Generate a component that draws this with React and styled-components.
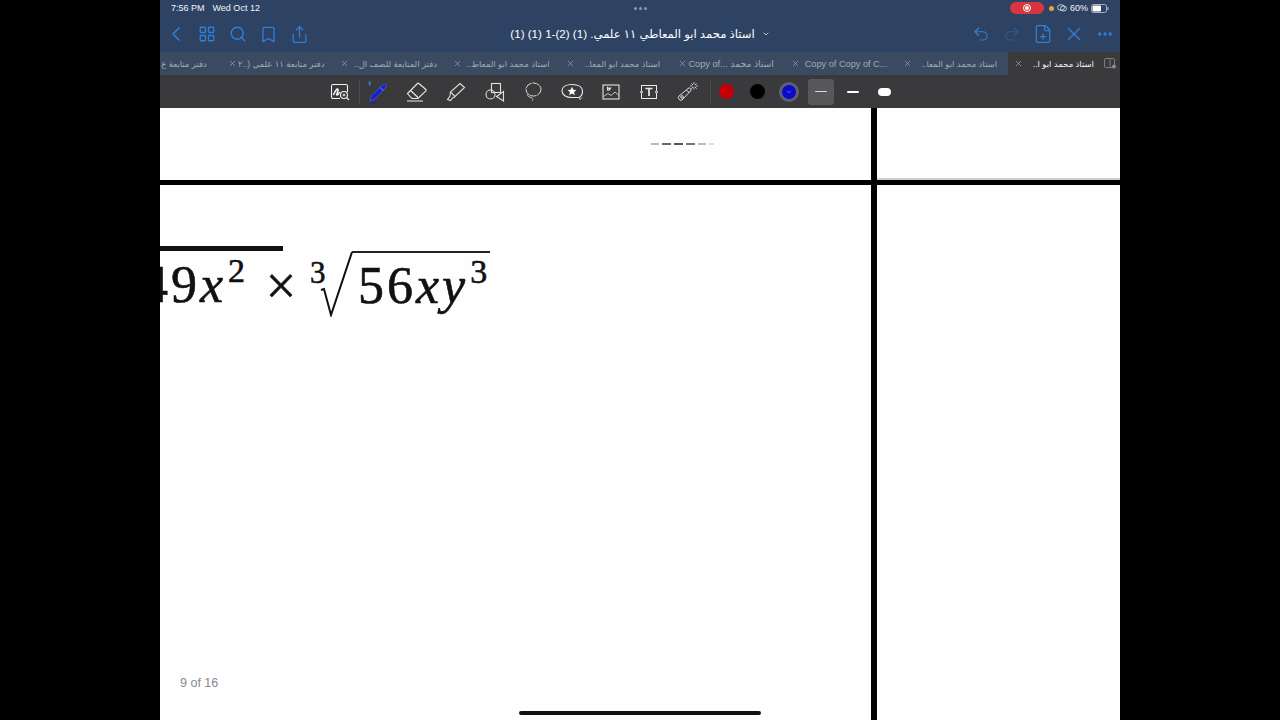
import React from 'react';
import styled, { createGlobalStyle } from 'styled-components';
import { ChevronLeft, ChevronDown, LayoutGrid, Search, Bookmark, Share, Undo2, Redo2, FilePlus, X, Ellipsis } from 'lucide-react';

const GlobalStyle = createGlobalStyle`
    html, body {
        margin: 0;
        height: 100%;
        background: #000;
    }
    #root {
        height: 100%;
    }
`;

const UI_FONT = `"Liberation Sans", "DejaVu Sans", sans-serif`;

const Stage = styled.div`
    width: 100%;
    height: 720px;
    display: flex;
    justify-content: center;
    overflow: hidden;
    background: #000;
    font-family: ${UI_FONT};
`;
const Screen = styled.div`
    position: relative;
    width: 960px;
    height: 100%;
    display: flex;
    flex-direction: column;
    background: #fff;
`;
const StatusBar = styled.div`
    height: 16px;
    padding: 0 11px;
    display: grid;
    grid-template-columns: 1fr auto 1fr;
    align-items: center;
    background: #2e4363;
    color: #f2f4f7;
    font-size: 9px;
`;
const Clock = styled.div`
    display: flex;
    gap: 8px;
`;
const Dots = styled.div`
    display: flex;
    gap: 2px;
`;
const Dot = styled.span`
    width: 3px;
    height: 3px;
    border-radius: 50%;
    background: #8d99ab;
`;
const StatusRight = styled.div`
    display: flex;
    justify-content: flex-end;
    align-items: center;
`;
const RecordPill = styled.div`
    width: 34px;
    height: 12px;
    border-radius: 6px;
    display: flex;
    align-items: center;
    justify-content: center;
    background: #d8353f;
    margin-right: 5px;
`;
const RecordRing = styled.span`
    width: 8px;
    height: 8px;
    box-sizing: border-box;
    border: 1px solid #fff;
    border-radius: 50%;
    display: flex;
    align-items: center;
    justify-content: center;
    &::after {
        content: '';
        width: 4px;
        height: 4px;
        border-radius: 50%;
        background: #fff;
    }
`;
const OrangeDot = styled.span`
    width: 5px;
    height: 5px;
    border-radius: 50%;
    background: #e8a33a;
    margin-right: 3px;
`;
const Percent = styled.span`
    margin: 0 3px;
`;

const NavBar = styled.div`
    height: 36px;
    display: grid;
    grid-template-columns: 1fr auto 1fr;
    align-items: center;
    background: #2e4363;
`;
const NavGroup = styled.div`
    display: flex;
    justify-content: ${(p) => (p.$end ? 'flex-end' : 'flex-start')};
`;
const NavButton = styled.div`
    width: 31px;
    height: 24px;
    display: flex;
    align-items: center;
    justify-content: center;
    color: ${(p) => (p.$dim ? '#2f5b8f' : '#2f80d6')};
`;
const Title = styled.div`
    display: flex;
    align-items: center;
    gap: 7px;
    color: #fff;
    font-size: 11.6px;
    white-space: nowrap;
`;

const TabBar = styled.div`
    height: 23px;
    display: flex;
    justify-content: flex-end;
    overflow: hidden;
    background: #3a4a60;
`;
const Tab = styled.div`
    flex: 0 0 ${(p) => (p.$active ? '92px' : '112.6px')};
    box-sizing: border-box;
    padding: 0 ${(p) => p.$pad || 8}px 0 ${(p) => (p.$active ? '6px' : '8px')};
    display: flex;
    align-items: center;
    justify-content: space-between;
    overflow: hidden;
    background: ${(p) => (p.$active ? '#3a3a3d' : 'transparent')};
    color: ${(p) => (p.$active ? '#f4f4f4' : '#a3abb8')};
    white-space: nowrap;
`;
const TabClose = styled.span`
    flex: none;
    display: flex;
    color: ${(p) => (p.$active ? '#c8c8c8' : '#aeb5c0')};
`;
const TabName = styled.span`
    direction: ${(p) => (p.$ltr ? 'ltr' : 'rtl')};
    font-size: ${(p) => (p.$ltr ? '9.2px' : '8.5px')};
`;
const TabSide = styled.div`
    flex: 0 0 20px;
    display: flex;
    align-items: center;
    justify-content: center;
    background: #3a3a3d;
`;

const Toolbar = styled.div`
    height: 33px;
    box-sizing: border-box;
    padding-left: 160.6px;
    display: flex;
    align-items: center;
    background: #3a3a3c;
`;
const ToolItem = styled.div`
    flex: 0 0 38.7px;
    display: flex;
    justify-content: center;
    align-items: center;
`;
const Divider = styled.span`
    flex: none;
    width: 1px;
    height: 24px;
    margin: 0 ${(p) => p.$after || 0}px 0 ${(p) => p.$before || 0}px;
    background: #4c4c4e;
`;
const Swatch = styled.div`
    flex: 0 0 ${(p) => (p.$selected ? '26px' : '31.6px')};
    height: ${(p) => (p.$selected ? '26px' : '25px')};
    margin: 0 ${(p) => (p.$selected ? '2.8px' : '0')};
    display: flex;
    align-items: center;
    justify-content: center;
    border-radius: 3px;
    background: ${(p) => (p.$selected ? '#58585a' : 'transparent')};
`;
const Color = styled.span`
    width: ${(p) => (p.$ring ? '14px' : '15px')};
    height: ${(p) => (p.$ring ? '14px' : '15px')};
    border-radius: 50%;
    display: flex;
    align-items: center;
    justify-content: center;
    background: ${(p) => p.$color};
    box-shadow: ${(p) => (p.$ring ? '0 0 0 3px #5d6075' : 'none')};
    color: #cdd3ff;
`;
const Stroke = styled.span`
    width: ${(p) => p.$w}px;
    height: ${(p) => p.$h}px;
    border-radius: ${(p) => p.$h / 2}px;
    background: ${(p) => p.$color || '#fff'};
`;

const Page = styled.div`
    flex: 1;
    min-height: 0;
    display: grid;
    grid-template-columns: 711px 5.5px 1fr;
    grid-template-rows: 72px 5px 1fr;
    background: #fefefe;
`;
const TopCell = styled.div`
    grid-column: 1;
    grid-row: 1;
    padding: 35px 0 0 491px;
`;
const SideCell = styled.div`
    grid-column: 3;
    grid-row: 1;
    border-bottom: 2px solid #cfcfcf;
`;
const RuleV = styled.div`
    grid-column: 2;
    grid-row: 1 / 4;
    background: #000;
`;
const RuleH = styled.div`
    grid-column: 1 / 4;
    grid-row: 2;
    background: #000;
`;
const Smudge = styled.div`
    display: flex;
    gap: 3px;
    filter: blur(0.4px);
`;
const SmudgeDash = styled.span`
    width: ${(p) => p.$w}px;
    height: 1.5px;
    background: ${(p) => p.$color};
`;
const MathCell = styled.div`
    grid-column: 1;
    grid-row: 3;
    padding-top: 61px;
    overflow: hidden;
`;
const MathLine = styled.div`
    display: flex;
    align-items: flex-start;
    margin-left: -18px;
    font-family: "Liberation Serif", serif;
    font-size: 52px;
    letter-spacing: 3px;
    color: #111;
    white-space: nowrap;
    -webkit-text-stroke: 0.6px #111;
`;
const Squared = styled.span`
    width: 141px;
    height: 62px;
    flex: none;
    border-top: 5px solid #111;
    line-height: 68px;
`;
const Sup = styled.sup`
    font-size: 34px;
    line-height: 0;
    letter-spacing: 0;
    margin-left: 2px;
    vertical-align: 20px;
    font-style: normal;
`;
const Times = styled.span`
    flex: none;
    width: 34px;
    margin: 0 0 0 -19px;
    font-size: 54px;
    line-height: 80px;
    letter-spacing: 0;
    text-align: center;
`;
const RootIndex = styled.span`
    flex: none;
    width: 15px;
    margin: 11px -5px 0 12px;
    font-size: 31px;
    line-height: 32px;
    letter-spacing: 0;
`;
const RootSign = styled.svg`
    flex: none;
    margin-top: 5px;
`;
const Radicand = styled.span`
    margin: 5px 0 0 -1px;
    padding: 0 3px 0 6px;
    border-top: 2px solid #222;
    height: 62px;
    line-height: 66px;
`;
const PageCount = styled.div`
    position: absolute;
    left: 20px;
    bottom: 30px;
    color: #8a8a8a;
    font-size: 12.5px;
`;
const HomeBar = styled.div`
    position: absolute;
    left: 359px;
    bottom: 5px;
    width: 242px;
    height: 4px;
    border-radius: 2px;
    background: #111;
`;

const tabs = [
    { name: 'دفتر متابعة ع', pad: 13 },
    { name: 'دفتر متابعة ١١ علمي (..٢' },
    { name: 'دفتر المتابعة للصف ال..' },
    { name: 'استاذ محمد ابو المعاط..' },
    { name: 'استاذ محمد ابو المعا..', pad: 10 },
    { name: 'Copy of... استاذ محمد', ltr: true, pad: 9 },
    { name: 'Copy of Copy of C...', ltr: true },
    { name: 'استاذ محمد ابو المعا..', pad: 11 },
    { name: 'استاذ محمد ابو ا..', active: true, pad: 6 },
];

const ScribbleIcon = () => (
    <svg width="20" height="18" viewBox="0 0 20 18" fill="none" stroke="#f2f2f2" strokeWidth="1.1">
        <path d="M3 1.5h13a1.5 1.5 0 0 1 1.5 1.5v6M10 15.5H3A1.5 1.5 0 0 1 1.5 14V3A1.5 1.5 0 0 1 3 1.5" />
        <path d="M3.5 12c2-5 4-7 4.5-5.500s-2 5-1 5.500 2-3 3-2.500" strokeWidth="1.6" />
        <circle cx="14" cy="12" r="3.500" />
        <path d="M16.500 14.500 19 17M12.700 12h2.600M14 10.700v2.600" />
    </svg>
);
const PenIcon = () => (
    <svg width="24" height="24" viewBox="0 0 26 26" fill="none">
        <path d="M3 1v5M1.500 2.500l3 2.500M1.500 5l3-2.500" stroke="#2f7fd0" strokeWidth="1" />
        <path d="M3 23l2-6L17 5.500c2-2 5-1 3.500 2L9 20z" fill="#1420d0" stroke="#5a6ff0" strokeWidth="0.6" />
        <path d="M14 8l3.500 3.500" stroke="#9fb0ff" strokeWidth="0.8" />
        <path d="M3 24.500h7" stroke="#1420d0" strokeWidth="1" />
    </svg>
);
const EraserIcon = () => (
    <svg width="22" height="20" viewBox="0 0 22 20" fill="none" stroke="#ececec" strokeWidth="1.1">
        <path d="M1.500 11.500 11.500 1.500a1 1 0 0 1 1.400 0l7 6a1 1 0 0 1 0 1.400L12 16.500H6z" />
        <path d="M4.500 8.500 12 15.500M1 19h16" />
    </svg>
);
const HighlighterIcon = () => (
    <svg width="20" height="20" viewBox="0 0 20 20" fill="none" stroke="#dcdcdc" strokeWidth="1.1">
        <path d="M14 1.500 18.500 5.500 9 14.500l-4.500-4.500zM4.500 10l-.5 4-2.500 3.500 3 1 2-2.500 3-1.500" />
    </svg>
);
const ShapesIcon = () => (
    <svg width="20" height="20" viewBox="0 0 20 20" fill="none" stroke="#e2e2e2" strokeWidth="1.1">
        <rect x="6.500" y="1.500" width="9" height="9" />
        <circle cx="5.500" cy="12.500" r="4.500" />
        <path d="M18.500 9.500v9.500l-7-4.500z" />
    </svg>
);
const LassoIcon = () => (
    <svg width="18" height="20" viewBox="0 0 18 20" fill="none" stroke="#dcdcdc" strokeWidth="1" strokeDasharray="7 0.800">
        <ellipse cx="9.500" cy="7.500" rx="7.500" ry="6.500" />
        <path d="M4 12c-1 2 1 3 3 3.500s2 2 1.500 3" />
    </svg>
);
const StarBubbleIcon = () => (
    <svg width="22" height="18" viewBox="0 0 22 18" fill="none" stroke="#ececec" strokeWidth="1.1">
        <path d="M18 14.500c2-1 3.500-3 3.500-6C21.500 4 17 1.500 11 1.500S1 4 1 8s4 6.500 10 6.500z" />
        <path d="M11 3.800l1.300 2.900 3.100.3-2.300 2.100.7 3.100-2.800-1.600-2.800 1.600.7-3.100L6.600 7l3.100-.3z" fill="#fff" stroke="none" />
        <path d="M18 14.500l1 2 2-2" strokeWidth="0.8" />
    </svg>
);
const ImageIcon = () => (
    <svg width="18" height="16" viewBox="0 0 18 16" fill="none" stroke="#e4e4e4" strokeWidth="1.1">
        <rect x="1" y="1" width="16" height="14" />
        <path d="M1.500 12.500 6 9.500l3 2 4-3.500 4 3.500" strokeWidth="0.8" />
        <path d="M5.500 3.500c1 1 2 1 3 .5-.5 1.500-1.500 2.500-3 2z" />
    </svg>
);
const TextBoxIcon = () => (
    <svg width="18" height="16" viewBox="0 0 18 16" fill="none" stroke="#ececec" strokeWidth="1">
        <rect x="1.500" y="1.500" width="15" height="13" />
        <path d="M5.500 4.500h7M9 4.500v7.500" strokeWidth="1.700" />
        <circle cx="1.500" cy="8" r="1" fill="#3a3a3c" />
        <circle cx="16.500" cy="8" r="1" fill="#3a3a3c" />
    </svg>
);
const WandIcon = () => (
    <svg width="22" height="22" viewBox="0 0 22 22" fill="none" stroke="#dedede" strokeWidth="1">
        <path d="M2 15 11 7.500a1.500 1.500 0 0 1 2.500 2.500L5 19a2 2 0 0 1-3-1 2 2 0 0 1 0-3z" />
        <circle cx="5" cy="16" r="1.300" />
        <path d="M9.500 9l3 3" />
        <path d="M17 1v2.500M17 6v2.500M13 5h2.500M18.500 5H21M14.300 2.300 16 4M18 6l1.700 1.700M19.700 2.300 18 4M14.300 7.700 16 6" strokeWidth="0.8" />
    </svg>
);
const BatteryIcon = () => (
    <svg width="18" height="9" viewBox="0 0 18 9">
        <rect x="0.500" y="0.500" width="15" height="8" rx="2" fill="none" stroke="#a9b2bf" />
        <rect x="1.500" y="1.500" width="8.500" height="6" rx="1" fill="#fff" />
        <rect x="16.300" y="3" width="1.200" height="3" rx="0.500" fill="#a9b2bf" />
    </svg>
);
const LinkedEyeIcon = () => (
    <svg width="10" height="8" viewBox="0 0 10 8" fill="none" stroke="#e8ecf2" strokeWidth="0.8">
        <ellipse cx="4" cy="3.500" rx="3.500" ry="2.800" />
        <ellipse cx="6.500" cy="4.500" rx="3" ry="2.500" />
    </svg>
);
const SidebarIcon = () => (
    <svg width="12" height="11" viewBox="0 0 12 11" fill="none" stroke="#8b8b8e" strokeWidth="0.8">
        <rect x="0.500" y="0.500" width="10" height="9" rx="1.500" />
        <path d="M6 0.500v9" />
        <circle cx="10" cy="8.500" r="2" fill="#8b8b8e" stroke="none" />
    </svg>
);

const App = () => (
    <Stage>
        <GlobalStyle />
        <Screen>
            <StatusBar>
                <Clock>
                    <span>7:56 PM</span>
                    <span>Wed Oct 12</span>
                </Clock>
                <Dots>
                    <Dot />
                    <Dot />
                    <Dot />
                </Dots>
                <StatusRight>
                    <RecordPill>
                        <RecordRing />
                    </RecordPill>
                    <OrangeDot />
                    <LinkedEyeIcon />
                    <Percent>60%</Percent>
                    <BatteryIcon />
                </StatusRight>
            </StatusBar>
            <NavBar>
                <NavGroup>
                    <NavButton><ChevronLeft size={24} strokeWidth={1.5} /></NavButton>
                    <NavButton><LayoutGrid size={18} strokeWidth={1.7} /></NavButton>
                    <NavButton><Search size={18} strokeWidth={1.8} /></NavButton>
                    <NavButton><Bookmark size={19} strokeWidth={1.6} /></NavButton>
                    <NavButton><Share size={19} strokeWidth={1.6} /></NavButton>
                </NavGroup>
                <Title>
                    <span dir="rtl">استاذ محمد ابو المعاطي ١١ علمي. (1) (2)-1 (1) (1)</span>
                    <ChevronDown size={8} strokeWidth={2} />
                </Title>
                <NavGroup $end>
                    <NavButton><Undo2 size={18} strokeWidth={1.6} /></NavButton>
                    <NavButton $dim><Redo2 size={18} strokeWidth={1.6} /></NavButton>
                    <NavButton><FilePlus size={20} strokeWidth={1.5} /></NavButton>
                    <NavButton><X size={22} strokeWidth={1.4} /></NavButton>
                    <NavButton><Ellipsis size={18} strokeWidth={2.4} /></NavButton>
                </NavGroup>
            </NavBar>
            <TabBar>
                {tabs.map((tab, idx) => (
                    <Tab key={idx} $active={tab.active} $pad={tab.pad}>
                        <TabClose $active={tab.active}><X size={9} strokeWidth={1.5} /></TabClose>
                        <TabName $ltr={tab.ltr}>{tab.name}</TabName>
                    </Tab>
                ))}
                <TabSide><SidebarIcon /></TabSide>
            </TabBar>
            <Toolbar>
                <ToolItem><ScribbleIcon /></ToolItem>
                <Divider $after={-1} />
                <ToolItem><PenIcon /></ToolItem>
                <ToolItem><EraserIcon /></ToolItem>
                <ToolItem><HighlighterIcon /></ToolItem>
                <ToolItem><ShapesIcon /></ToolItem>
                <ToolItem><LassoIcon /></ToolItem>
                <ToolItem><StarBubbleIcon /></ToolItem>
                <ToolItem><ImageIcon /></ToolItem>
                <ToolItem><TextBoxIcon /></ToolItem>
                <ToolItem><WandIcon /></ToolItem>
                <Divider $before={3} $after={-1} />
                <Swatch><Color $color="#c40006" /></Swatch>
                <Swatch><Color $color="#000" /></Swatch>
                <Swatch><Color $ring $color="#0a0ac8"><ChevronDown size={6} strokeWidth={2} /></Color></Swatch>
                <Swatch $selected><Stroke $w={12} $h={1.5} $color="#d8d8d8" /></Swatch>
                <Swatch><Stroke $w={12} $h={2} /></Swatch>
                <Swatch><Stroke $w={13} $h={8} /></Swatch>
            </Toolbar>
            <Page>
                <TopCell>
                    <Smudge>
                        <SmudgeDash $w={8} $color="#bbb" />
                        <SmudgeDash $w={9} $color="#666" />
                        <SmudgeDash $w={9} $color="#555" />
                        <SmudgeDash $w={9} $color="#777" />
                        <SmudgeDash $w={8} $color="#bbb" />
                        <SmudgeDash $w={5} $color="#ddd" />
                    </Smudge>
                </TopCell>
                <RuleV />
                <SideCell />
                <RuleH />
                <MathCell>
                    <MathLine>
                        <Squared>
                            49<i>x</i><Sup>2</Sup>
                        </Squared>
                        <Times>×</Times>
                        <RootIndex>3</RootIndex>
                        <RootSign width="33" height="66" viewBox="0 0 33 66" fill="none" stroke="#111">
                            <path d="M1 39l3-1 7 26L32 1" strokeWidth="2" />
                        </RootSign>
                        <Radicand>
                            56<i>xy</i><Sup>3</Sup>
                        </Radicand>
                    </MathLine>
                </MathCell>
            </Page>
            <PageCount>9 of 16</PageCount>
            <HomeBar />
        </Screen>
    </Stage>
);

export default App;
